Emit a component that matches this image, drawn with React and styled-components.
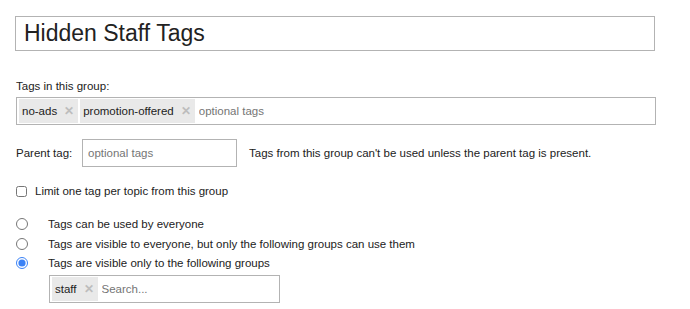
import React, { useState } from 'react';
import styled, { createGlobalStyle } from 'styled-components';

const GlobalStyle = createGlobalStyle`
  body {
    margin: 0;
    background: #ffffff;
    font-family: "Liberation Sans", Arial, sans-serif;
    color: #222222;
  }
`;

const App = () => {
  const [visibility, setVisibility] = useState('private');
  const [tags] = useState(['no-ads', 'promotion-offered']);

  return (
    <>
      <GlobalStyle />
      <Page>
        <TitleInput defaultValue="Hidden Staff Tags" />

        <Section>
          <FieldLabel>Tags in this group:</FieldLabel>
          <ChipBox>
            {tags.map((t) => (
              <Chip key={t}>
                {t}
                <Remove>✕</Remove>
              </Chip>
            ))}
            <ChipInput placeholder="optional tags" />
          </ChipBox>
        </Section>

        <ParentRow>
          <InlineLabel>Parent tag:</InlineLabel>
          <SmallInput placeholder="optional tags" />
          <Hint>Tags from this group can't be used unless the parent tag is present.</Hint>
        </ParentRow>

        <CheckRow>
          <Check type="checkbox" />
          <span>Limit one tag per topic from this group</span>
        </CheckRow>

        <RadioList>
          <RadioRow>
            <Radio
              type="radio"
              name="vis"
              checked={visibility === 'public'}
              onChange={() => setVisibility('public')}
            />
            <span>Tags can be used by everyone</span>
          </RadioRow>
          <RadioRow>
            <Radio
              type="radio"
              name="vis"
              checked={visibility === 'readonly'}
              onChange={() => setVisibility('readonly')}
            />
            <span>Tags are visible to everyone, but only the following groups can use them</span>
          </RadioRow>
          <RadioRow>
            <Radio
              type="radio"
              name="vis"
              checked={visibility === 'private'}
              onChange={() => setVisibility('private')}
            />
            <span>Tags are visible only to the following groups</span>
          </RadioRow>
        </RadioList>

        <GroupBox>
          <Chip>
            staff
            <Remove>✕</Remove>
          </Chip>
          <ChipInput placeholder="Search..." />
        </GroupBox>
      </Page>
    </>
  );
};

/*----------- Styled Components ----------*/
const Page = styled.div`
  display: flex;
  flex-direction: column;
  padding: 16px 35px 0 15px;
  width: 640px;
  font-size: 11.5px;
`;

const TitleInput = styled.input`
  box-sizing: border-box;
  width: 640px;
  height: 35px;
  margin: 0;
  padding: 0 8px;
  border: 1px solid #b3b3b3;
  border-radius: 0;
  font-family: "Liberation Sans", Arial, sans-serif;
  font-size: 23px;
  color: #222222;
  outline: none;
`;

const Section = styled.div`
  display: flex;
  flex-direction: column;
  margin-top: 27px;
`;

const FieldLabel = styled.div`
  line-height: 16px;
  margin-bottom: 3px;
  padding-left: 1px;
`;

const ChipBox = styled.div`
  box-sizing: border-box;
  display: flex;
  align-items: center;
  gap: 2px;
  width: 640px;
  height: 28px;
  margin-left: 1px;
  padding: 0 2px;
  border: 1px solid #b3b3b3;
`;

const Chip = styled.span`
  display: inline-flex;
  align-items: center;
  height: 24px;
  padding: 0 4px 0 3px;
  background: #e9e9e9;
  color: #222222;
  font-size: 11.5px;
  white-space: nowrap;
`;

const Remove = styled.span`
  margin-left: 7px;
  color: #bdbdbd;
  font-size: 12px;
  font-weight: bold;
  line-height: 1;
`;

const ChipInput = styled.input`
  flex: 1;
  min-width: 0;
  border: none;
  outline: none;
  padding: 0 2px;
  font-family: "Liberation Sans", Arial, sans-serif;
  font-size: 11.5px;
  background: transparent;

  ::placeholder {
    color: #8c8c8c;
  }
`;

const ParentRow = styled.div`
  display: flex;
  align-items: center;
  margin-top: 14px;
  padding-left: 1px;
`;

const InlineLabel = styled.span`
  width: 66px;
`;

const SmallInput = styled.input`
  box-sizing: border-box;
  width: 155px;
  height: 28px;
  margin: 0;
  padding: 0 5px;
  border: 1px solid #b3b3b3;
  font-family: "Liberation Sans", Arial, sans-serif;
  font-size: 11.5px;
  outline: none;

  ::placeholder {
    color: #8c8c8c;
  }
`;

const Hint = styled.span`
  margin-left: 12px;
`;

const CheckRow = styled.label`
  display: flex;
  align-items: center;
  gap: 8px;
  margin-top: 16px;
  padding-left: 1px;
  line-height: 16px;
`;

const Check = styled.input`
  width: 11px;
  height: 11px;
  margin: 0;
`;

const RadioList = styled.div`
  display: flex;
  flex-direction: column;
  gap: 3.5px;
  margin-top: 17px;
`;

const RadioRow = styled.label`
  display: flex;
  align-items: center;
  height: 16px;
  padding-left: 1px;
`;

const Radio = styled.input`
  width: 12px;
  height: 12px;
  margin: 0 20px 0 0;
  accent-color: #3b82f6;
`;

const GroupBox = styled.div`
  box-sizing: border-box;
  display: flex;
  align-items: center;
  gap: 2px;
  width: 231px;
  height: 28px;
  margin-top: 4px;
  margin-left: 34px;
  padding: 0 2px;
  border: 1px solid #b3b3b3;
`;

export default App;
